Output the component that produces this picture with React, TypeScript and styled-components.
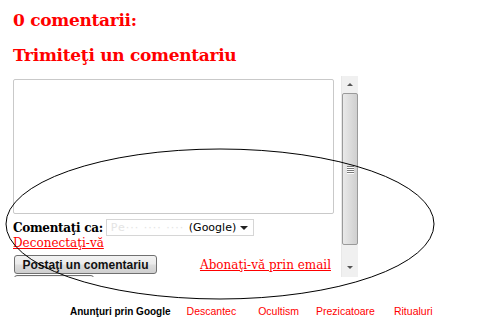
import styled, { createGlobalStyle } from "styled-components";

const GlobalStyle = createGlobalStyle`
  html, body {
    margin: 0;
    padding: 0;
    background: #fff;
  }
`;

const Page = styled.div`
  position: relative;
  width: 498px;
  height: 329px;
  overflow: hidden;
  background: #fff;
`;

const Heading = styled.h2<{ $top: number }>`
  margin: 0;
  padding: ${(p) => p.$top}px 0 0 13px;
  font-family: "DejaVu Serif", Georgia, serif;
  font-weight: bold;
  font-size: 17px;
  line-height: 20px;
  color: #ff0000;
  letter-spacing: -0.3px;
`;

const Frame = styled.div`
  display: flex;
  margin: 11px 0 0 10px;
  width: 348px;
  height: 201px;
  overflow: hidden;
`;

const FrameBody = styled.div`
  flex: 1;
  padding: 3px 0 0 3px;
  font-family: "DejaVu Serif", Georgia, serif;
  font-size: 12px;
`;

const TextBox = styled.div`
  box-sizing: border-box;
  width: 321px;
  height: 135px;
  border: 1px solid #c9c9c9;
  border-radius: 2px;
`;

const IdentityRow = styled.div`
  display: flex;
  align-items: center;
  gap: 3px;
  margin-top: 5px;
  height: 17px;
`;

const Label = styled.span`
  font-weight: bold;
  font-size: 12px;
  letter-spacing: -0.3px;
  color: #000;
`;

const Select = styled.div`
  box-sizing: border-box;
  display: flex;
  align-items: center;
  width: 148px;
  height: 17px;
  border: 1px solid #d6d6d6;
  font-family: Tahoma, "DejaVu Sans", sans-serif;
  font-size: 11px;
  color: #000;
  padding-left: 4px;
`;

const Blurred = styled.span`
  color: #e4e4e4;
  width: 78px;
  overflow: hidden;
  white-space: nowrap;
  letter-spacing: 1px;
`;

const Caret = styled.span`
  margin-left: auto;
  margin-right: 5px;
  width: 0;
  height: 0;
  border-left: 4px solid transparent;
  border-right: 4px solid transparent;
  border-top: 4px solid #222;
`;

const RedLink = styled.a`
  color: #ff0000;
  text-decoration: underline;
  font-size: 12px;
  cursor: pointer;
`;

const LinkLine = styled.div`
  line-height: 14px;
`;

const ActionRow = styled.div`
  display: flex;
  align-items: center;
  justify-content: space-between;
  width: 317px;
  margin-top: 5px;
  padding-left: 1px;
`;

const Button = styled.button<{ $w: number }>`
  box-sizing: border-box;
  width: ${(p) => p.$w}px;
  height: 19px;
  padding: 0;
  border: 1px solid #707070;
  border-radius: 3px;
  background: linear-gradient(#f2f2f2, #ebebeb 48%, #dddddd 52%, #cfcfcf);
  font-family: "Liberation Sans", Arial, sans-serif;
  font-weight: bold;
  font-size: 12px;
  white-space: nowrap;
  color: #111;
`;

const SecondButton = styled(Button)`
  margin: 1px 0 0 1px;
  display: block;
`;

const Scrollbar = styled.div`
  display: flex;
  flex-direction: column;
  width: 16px;
  background: #f0f0f0;
  border-left: 1px solid #e8e8e8;
`;

const ArrowCell = styled.div<{ $down?: boolean }>`
  display: flex;
  align-items: center;
  justify-content: center;
  height: 16px;
  &::after {
    content: "";
    width: 0;
    height: 0;
    border-left: 3px solid transparent;
    border-right: 3px solid transparent;
    ${(p) => (p.$down ? "border-top: 3px solid #555;" : "border-bottom: 3px solid #555;")}
  }
`;

const Thumb = styled.div`
  box-sizing: border-box;
  height: 152px;
  margin: 1px 0 0 0;
  border: 1px solid #9a9a9a;
  border-radius: 2px;
  background: linear-gradient(90deg, #e9e9e9, #dcdcdc 50%, #cfcfcf);
  display: flex;
  flex-direction: column;
  align-items: center;
  justify-content: center;
  gap: 1px;
`;

const Grip = styled.span`
  width: 7px;
  height: 1px;
  background: #777;
  box-shadow: 0 1px 0 #fff;
`;

const Track = styled.div`
  flex: 1;
  display: flex;
  flex-direction: column;
  justify-content: flex-end;
  padding-bottom: 2px;
`;

const AdsRow = styled.div`
  display: flex;
  align-items: baseline;
  margin-top: 28px;
  padding-left: 70px;
  font-family: Arial, "Liberation Sans", sans-serif;
  font-size: 10.5px;
`;

const AdsLabel = styled.span`
  font-weight: bold;
  font-size: 10px;
  color: #000;
  margin-right: 16px;
`;

const AdLink = styled.a<{ $gap: number }>`
  color: #ff0000;
  margin-right: ${(p) => p.$gap}px;
  text-decoration: none;
`;

const Circle = styled.svg`
  position: absolute;
  left: 0;
  top: 0;
  pointer-events: none;
`;

const ads = [
  { text: "Descantec", gap: 22 },
  { text: "Ocultism", gap: 17 },
  { text: "Prezicatoare", gap: 19 },
  { text: "Ritualuri", gap: 0 },
];

export default function App() {
  return (
    <Page>
      <GlobalStyle />
      <Heading $top={10}>0 comentarii:</Heading>
      <Heading $top={15}>Trimiteţi un comentariu</Heading>
      <Frame>
        <FrameBody>
          <TextBox />
          <IdentityRow>
            <Label>Comentaţi ca:</Label>
            <Select>
              <Blurred>Pe··· ···· ····</Blurred>
              (Google)
              <Caret />
            </Select>
          </IdentityRow>
          <LinkLine>
            <RedLink>Deconectaţi-vă</RedLink>
          </LinkLine>
          <ActionRow>
            <Button $w={143}>Postaţi un comentariu</Button>
            <RedLink>Abonaţi-vă prin email</RedLink>
          </ActionRow>
          <SecondButton $w={80} />
        </FrameBody>
        <Scrollbar>
          <ArrowCell />
          <Thumb>
            <Grip />
            <Grip />
            <Grip />
            <Grip />
          </Thumb>
          <Track>
            <ArrowCell $down />
          </Track>
        </Scrollbar>
      </Frame>
      <AdsRow>
        <AdsLabel>Anunţuri prin Google</AdsLabel>
        {ads.map((a) => (
          <AdLink key={a.text} $gap={a.gap}>
            {a.text}
          </AdLink>
        ))}
      </AdsRow>
      <Circle width="498" height="329">
        <ellipse cx="220" cy="224" rx="214" ry="75" fill="none" stroke="#000" strokeWidth="1" />
      </Circle>
    </Page>
  );
}
